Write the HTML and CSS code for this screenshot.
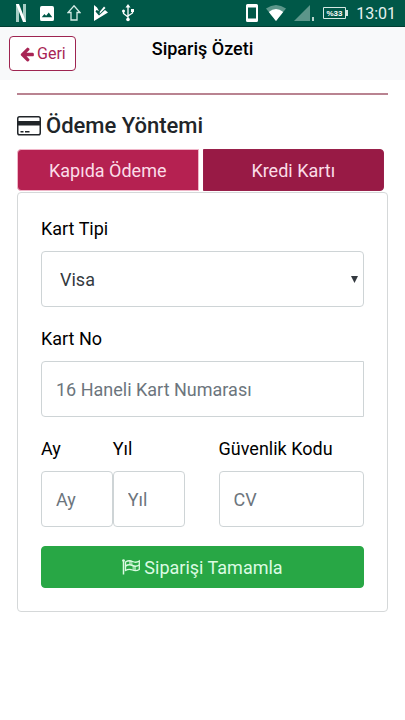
FILE: index.html
```html
<!DOCTYPE html>
<html lang="tr">
<head>
<meta charset="utf-8">
<meta name="viewport" content="width=device-width, initial-scale=1">
<title>Sipariş Özeti</title>
<link rel="stylesheet" href="styles.css">
</head>
<body>
<div class="status">
  <div class="status-group status-left">
    <svg width="12" height="18" viewBox="0 0 12 18"><path d="M1 0h3v18H1zM8 0h3v18H8z" fill="#a5cdc4"/><path d="M1 0h3l7 18H8z" fill="#fff"/></svg>
    <svg width="14" height="15" viewBox="0 0 16 16" preserveAspectRatio="none"><path fill="#fff" fill-rule="evenodd" d="M2 0h12a2 2 0 0 1 2 2v12a2 2 0 0 1-2 2H2a2 2 0 0 1-2-2V2a2 2 0 0 1 2-2zM2 12h12l-4-5-3 3.500-2-2z"/></svg>
    <svg width="14" height="16" viewBox="1 1 14 16"><path d="M8 1.800 14 8.500h-3v7.500H5V8.500H2z" fill="none" stroke="#d5ebe5" stroke-width="1.300"/></svg>
    <svg width="14" height="16" viewBox="0 0 14 16"><path fill="#fff" d="M0 0 3 2.500 5 6 2.500 5 1.500 6.500l3.500 4L11 5l3 2.500L0 16z"/><path d="m6 6.500 4-5 1.500 1.500L5.500 9z" fill="#fff"/></svg>
    <svg width="14" height="18" viewBox="0 0 14 18" fill="none" stroke="#fff" stroke-width="1.300"><path d="M7 3v12M2.500 7v2.500L7 13M11.500 6v3L7 12"/><path d="M7 0l2.500 3.500h-5z" fill="#fff" stroke="none"/><circle cx="7" cy="15.500" r="1.800" fill="#fff" stroke="none"/><circle cx="2.500" cy="7" r="1.500" fill="#fff" stroke="none"/><path d="M10 5h3v3h-3z" fill="#fff" stroke="none"/></svg>
  </div>
  <div class="status-group status-right">
    <svg width="12" height="18" viewBox="0 0 12 18"><path fill="#fff" fill-rule="evenodd" d="M1.500 0h9A1.500 1.500 0 0 1 12 1.500v15a1.500 1.500 0 0 1-1.500 1.500h-9A1.500 1.500 0 0 1 0 16.500v-15A1.500 1.500 0 0 1 1.500 0zM2 3.500v11h8v-11z"/></svg>
    <svg width="20" height="16" viewBox="0 0 20 16"><path d="M10 16 0 3.500Q10-3.500 20 3.500z" fill="#5c968a"/><path d="M10 16 2.800 7Q10 1 17.200 7z" fill="#fff"/></svg>
    <svg width="21" height="16" viewBox="0 0 21 16"><path d="M16 0v16H0z" fill="#5c968a"/><path d="M18 12h2v4h-2z" fill="#b9d5ce"/></svg>
    <svg width="25" height="12" viewBox="0 0 25 12"><path d="M.500.500h22v11H.500z" fill="none" stroke="#d5e8e3"/><path d="M23 3h2v6h-2z" fill="#d5e8e3"/><text class="battery-text" x="11.500" y="9" text-anchor="middle">%33</text></svg>
    <span class="clock">13:01</span>
  </div>
</div>
<header class="topbar">
  <button class="back" type="button"><svg width="16" height="16" viewBox="0 0 1792 1792"><path fill="currentColor" d="M1664 896v128q0 53-32.500 90.500t-84.500 37.500h-704l293 294q38 36 38 90t-38 90l-75 76q-37 37-90 37-52 0-91-37l-651-652q-37-37-37-90 0-52 37-91l651-650q38-38 91-38 52 0 90 38l75 74q38 38 38 91t-38 91l-293 293h704q52 0 84.500 37.500t32.500 90.500z"/></svg>Geri</button>
  <h1 class="title">Sipariş Özeti</h1>
</header>
<main class="content">
  <hr class="rule">
  <h2 class="heading"><svg width="24" height="20" viewBox="0 0 24 20"><rect x=".75" y=".75" width="22.500" height="18" rx="1.800" fill="none" stroke="currentColor" stroke-width="1.500"/><path d="M1 5h22v4.500H1zM3.500 15h3v1.500h-3zM8 15h4.500v1.500H8z" fill="currentColor"/></svg>Ödeme Yöntemi</h2>
  <div class="tabs">
    <button class="tab" type="button">Kapıda Ödeme</button>
    <button class="tab tab-active" type="button">Kredi Kartı</button>
  </div>
  <form class="card">
    <div class="field">
      <label for="type">Kart Tipi</label>
      <div class="select-wrap">
        <select class="control" id="type"><option>Visa</option></select>
        <svg class="caret" width="7" height="7" viewBox="0 0 7 7"><path d="M0 0h7L3.500 7z" fill="#343a40"/></svg>
      </div>
    </div>
    <div class="field">
      <label for="number">Kart No</label>
      <input class="control control-number" id="number" type="text" placeholder="16 Haneli Kart Numarası">
    </div>
    <div class="row">
      <div class="field">
        <label for="month">Ay</label>
        <input class="control" id="month" type="text" placeholder="Ay">
      </div>
      <div class="field">
        <label for="year">Yıl</label>
        <input class="control" id="year" type="text" placeholder="Yıl">
      </div>
      <div class="field field-code">
        <label for="code">Güvenlik Kodu</label>
        <input class="control" id="code" type="text" placeholder="CV">
      </div>
    </div>
    <button class="submit" type="button"><svg width="18" height="16" viewBox="0 0 18 16"><path d="M1.500 1v14.500" stroke="currentColor" stroke-width="1.500"/><circle cx="1.500" cy="1.500" r="1.300" fill="currentColor"/><path d="M3.500 3Q7 .800 10.500 2.500T17.300 2v8.500Q14 12.500 10.500 11T3.500 11.500z" fill="none" stroke="currentColor" stroke-width="1.300"/><path d="M3.500 7Q7 4.800 10.500 6.500T17.300 6" fill="none" stroke="currentColor" stroke-width="1.500"/><path d="M7 1.500q2 0 3.500 1v4Q9 5.500 7 5.500zM10.500 6.500q2 .700 3.500.500v4.300q-1.700.400-3.500-.300z" fill="currentColor" opacity=".6"/></svg>Siparişi Tamamla</button>
  </form>
</main>
</body>
</html>
```
FILE: styles.css
```css
* { box-sizing: border-box; }
body {
  margin: 0;
  background: #fff;
  color: #000;
  font: 18px/25px Roboto, sans-serif;
}
svg { flex: none; }
button, input, select { font: inherit; }

.status {
  display: flex;
  justify-content: space-between;
  height: 27px;
  padding: 0 9px 0 15px;
  background: #005848;
  border-bottom: 1px solid #003d31;
  color: #e5f1ee;
}
.status-group { display: flex; align-items: center; }
.status-left { gap: 13px; }
.status-right { gap: 8px; }
.battery-text { font: bold 8px "Liberation Sans", sans-serif; fill: #fff; }
.clock { font-size: 16px; }

.topbar {
  display: grid;
  grid-template-columns: 1fr auto 1fr;
  align-items: start;
  padding: 9px;
  background: #f8f9fa;
}
.back {
  display: flex;
  align-items: center;
  justify-self: start;
  gap: 2px;
  height: 35px;
  padding: 0 9px;
  border: 1px solid #9e2450;
  border-radius: 4px;
  background: #fff;
  color: #a82454;
  font-size: 16px;
}
.title {
  margin: 0;
  font-size: 18px;
  font-weight: 500;
}

.content { padding: 13px 17px 24px; }
.topbar { min-height: 53px; }
.rule {
  height: 2px;
  margin: 0 0 16px;
  border: 0;
  background: #b98391;
}
.heading {
  display: flex;
  align-items: center;
  gap: 5px;
  margin: 0 0 8px;
  color: #212529;
  font-size: 22px;
  font-weight: 500;
  line-height: 30px;
}
.tabs {
  display: grid;
  grid-template-columns: 1fr 1fr;
  gap: 4px;
  margin-bottom: 1px;
  padding-right: 4px;
}
.tab {
  height: 42px;
  padding: 0;
  border: 1px solid #f0b5c8;
  border-radius: 4px 0 0 4px;
  background: #b52151;
  color: #fbdde8;
}
.tab-active {
  border-color: #98204a;
  border-radius: 0 4px 4px 0;
  background: #981a45;
}

.card {
  padding: 23px;
  border: 1px solid #d5d8d9;
  border-radius: 4px;
}
.field {
  display: flex;
  flex-direction: column;
  gap: 10px;
  min-width: 0;
  margin-bottom: 19px;
}
.control {
  width: 100%;
  height: 56px;
  padding: 0 14px;
  border: 1px solid #ced4d6;
  border-radius: 4px;
  background: #fff;
  color: #343a40;
}
.control::placeholder { color: #6c757d; opacity: 1; }
.control-number { border-radius: 4px 0 0 4px; }
.select-wrap { position: relative; }
select.control {
  display: block;
  padding: 0 18px;
  appearance: none;
}
.caret {
  position: absolute;
  top: 25px;
  right: 6px;
  pointer-events: none;
}
.row {
  display: grid;
  grid-template-columns: 2fr 2fr 5fr;
}
.field-code { padding-left: 34px; }
.submit {
  display: flex;
  align-items: center;
  justify-content: center;
  gap: 4px;
  width: 100%;
  height: 42px;
  padding: 0;
  border: 1px solid #28a745;
  border-radius: 4px;
  background: #28a745;
  color: #dcfbe3;
}
```
